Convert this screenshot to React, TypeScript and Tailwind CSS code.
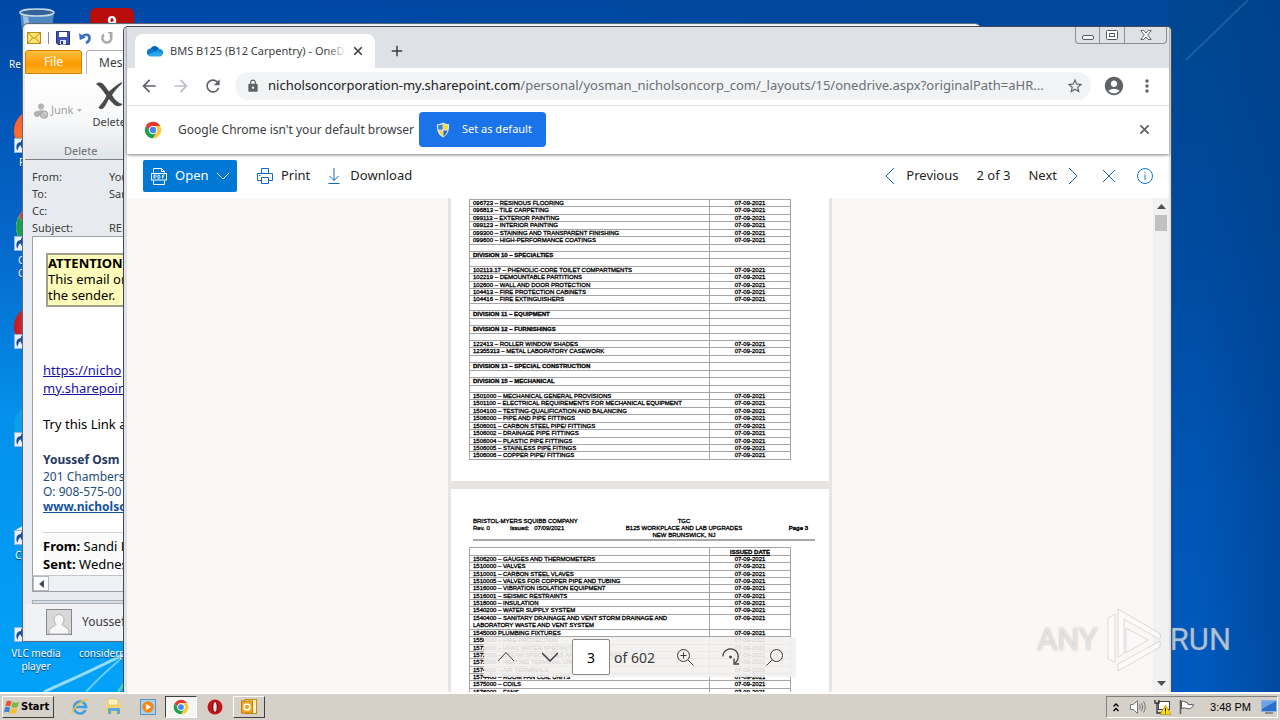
import React from "react";
import {
  MdArrowBack,
  MdArrowForward,
  MdRefresh,
  MdLock,
  MdStarBorder,
  MdAccountCircle,
  MdMoreVert,
  MdAdd,
} from "react-icons/md";

type Row = { text: string; date?: string; heading?: boolean; tall?: boolean };

const D = "07-09-2021";
const item = (text: string): Row => ({ text, date: D });
const division = (text: string): Row => ({ text, heading: true });
const blank: Row = { text: "" };

const pageTwoRows: Row[] = [
  item("096723 – RESINOUS FLOORING"),
  item("096813 – TILE CARPETING"),
  item("099113 – EXTERIOR PAINTING"),
  item("099123 – INTERIOR PAINTING"),
  item("099300 – STAINING AND TRANSPARENT FINISHING"),
  item("099600 – HIGH-PERFORMANCE COATINGS"),
  blank,
  division("DIVISION 10 – SPECIALTIES"),
  blank,
  item("102113.17 – PHENOLIC-CORE TOILET COMPARTMENTS"),
  item("102219 – DEMOUNTABLE PARTITIONS"),
  item("102600 – WALL AND DOOR PROTECTION"),
  item("104413 – FIRE PROTECTION CABINETS"),
  item("104416 – FIRE EXTINGUISHERS"),
  blank,
  division("DIVISION 11 – EQUIPMENT"),
  blank,
  division("DIVISION 12 – FURNISHINGS"),
  blank,
  item("122413 – ROLLER WINDOW SHADES"),
  item("12355313 – METAL LABORATORY CASEWORK"),
  blank,
  division("DIVISION 13 – SPECIAL CONSTRUCTION"),
  blank,
  division("DIVISION 15 – MECHANICAL"),
  blank,
  item("1501000 – MECHANICAL GENERAL PROVISIONS"),
  item("1501100 – ELECTRICAL REQUIREMENTS FOR MECHANICAL EQUIPMENT"),
  item("1504100 – TESTING-QUALIFICATION AND BALANCING"),
  item("1506000 – PIPE AND PIPE FITTINGS"),
  item("1506001 – CARBON STEEL PIPE/ FITTINGS"),
  item("1506002 – DRAINAGE PIPE FITTINGS"),
  item("1506004 – PLASTIC PIPE FITTINGS"),
  item("1506005 – STAINLESS PIPE FITINGS"),
  item("1506006 – COPPER PIPE/ FITTINGS"),
];

const pageThreeRows: Row[] = [
  item("1506200 – GAUGES AND THERMOMETERS"),
  item("1510000 – VALVES"),
  item("1510001 – CARBON STEEL VLAVES"),
  item("1510005 – VALVES FOR COPPER PIPE AND TUBING"),
  item("1516000 – VIBRATION ISOLATION EQUIPMENT"),
  item("1516001 – SEISMIC RESTRAINTS"),
  item("1518000 – INSULATION"),
  item("1540200 – WATER SUPPLY SYSTEM"),
  {
    text: "1540400 – SANITARY DRAINAGE AND VENT STORM DRAINAGE AND LABORATORY WASTE AND VENT SYSTEM",
    date: D,
    tall: true,
  },
  item("1545000 PLUMBING FIXTURES"),
  item("1550000 – FIRE PROTECTION"),
  item("1571000 – HVAC WATER SPECIALTIES"),
  item("1572000 – STEAM SPECIALTIES AND ACCESSORIES"),
  item("1573000 – HEATING TERMINAL UNITS"),
  item("1574000 – AIR TERMINALS"),
  item("1574400 – ROOM FAN COIL UNITS"),
  item("1575000 – COILS"),
  item("1576000 – FANS"),
];

function SpecTable({ rows, header, height }: { rows: Row[]; header?: boolean; height: string }) {
  return (
    <table
      className={`w-[322px] table-fixed border-collapse text-[6px] leading-[6px] text-black [-webkit-text-stroke:0.3px_#000] ${height}`}
    >
      <colgroup>
        <col />
        <col className="w-[81px]" />
      </colgroup>
      {header && (
        <thead>
          <tr className="h-2">
            <th className="border border-[#a5a5a5] p-0" />
            <th className="border border-[#a5a5a5] p-0 text-center font-bold underline">ISSUED DATE</th>
          </tr>
        </thead>
      )}
      <tbody>
        {rows.map((row, i) => (
          <tr key={i} className={row.tall ? "h-[15px]" : "h-[7px]"}>
            <td
              className={`border border-[#a5a5a5] p-0 pl-[3px] align-top ${
                row.tall ? "pr-8 leading-[7px]" : "whitespace-nowrap"
              } ${row.heading ? "font-bold" : ""}`}
            >
              {row.text}
            </td>
            <td className="border border-[#a5a5a5] p-0 text-center align-top">{row.date}</td>
          </tr>
        ))}
      </tbody>
    </table>
  );
}

function ChromeLogo({ className }: { className?: string }) {
  return (
    <svg viewBox="0 0 48 48" className={className} aria-hidden="true">
      <circle cx="24" cy="24" r="22" fill="#fff" />
      <path d="M24 13h19.1A22 22 0 0 0 5 13l9.5 16.5A11 11 0 0 1 24 13z" fill="#e33b2e" />
      <path d="M33.5 29.5L24 46A22 22 0 0 0 43.1 13H24a11 11 0 0 1 9.5 16.5z" fill="#fcc934" />
      <path d="M14.5 29.5L5 13a22 22 0 0 0 19 33l9.5-16.5a11 11 0 0 1-19 0z" fill="#1e9e4f" />
      <circle cx="24" cy="24" r="11" fill="#fff" />
      <circle cx="24" cy="24" r="8.6" fill="#4285f4" />
    </svg>
  );
}

function OneDriveLogo() {
  return (
    <svg viewBox="0 2 16 12" className="h-3 w-4 shrink-0" aria-hidden="true">
      <path d="M3.500 6A4.600 4.600 0 0 1 12 5.800L10 10 4 9z" fill="#0364b8" />
      <path d="M3.600 5.500a3.900 3.900 0 0 0-3 6.300L9.500 9.500 6 6.200A4 4 0 0 0 3.600 5.500z" fill="#0f78d4" />
      <path d="M12 5.800a3.800 3.800 0 0 1 3.600 5.600L8.500 8.500A4 4 0 0 1 12 5.800z" fill="#1490df" />
      <path d="M.6 11.800A3.600 3.600 0 0 0 3.600 13.500h9.200a3 3 0 0 0 2.800-2.100L9 8.300z" fill="#28a8ea" />
    </svg>
  );
}

function Shield() {
  return (
    <svg viewBox="0 0 16 18" className="h-4 w-[14px] shrink-0" aria-hidden="true">
      <path d="M8 .5C6 2 3.500 2.500 1 2.500 1 9 2 14.500 8 17.500 14 14.500 15 9 15 2.500 12.500 2.500 10 2 8 .5z" fill="#e8eef5" />
      <path d="M7.600 2.200C6 3.200 4.200 3.700 2.200 3.700c0 1.800.1 3.600.5 5.100h4.900z" fill="#3d86d6" />
      <path d="M8.400 2.200c1.600 1 3.400 1.500 5.400 1.500 0 1.800-.1 3.600-.5 5.100H8.400z" fill="#f9d835" />
      <path d="M2.900 9.600C3.600 12.500 5 14.700 7.600 16.200V9.600z" fill="#f9d835" />
      <path d="M13.100 9.600c-.7 2.900-2.100 5.100-4.700 6.600V9.600z" fill="#2e6cc0" />
    </svg>
  );
}

function PdfIcon() {
  return (
    <svg viewBox="0 0 16 17" className="h-[17px] w-4" fill="none" stroke="#fff" strokeWidth="1" aria-hidden="true">
      <path d="M2.500 4.500v-4h8l3 3v1M2.500 12.500v4h11v-4M10.500.5v3h3" />
      <rect x=".5" y="5.500" width="15" height="6.500" />
      <path d="M3 10.500V7h1.200a1 1 0 0 1 0 2.200H3M7 7v3.500h.7c1.800 0 1.800-3.500 0-3.500zM11.500 10.500V7h2M11.500 8.800h1.600" strokeWidth=".9" />
    </svg>
  );
}

function PrinterIcon() {
  return (
    <svg viewBox="0 0 16 16" className="size-4" fill="none" stroke="#0f6cbd" aria-hidden="true">
      <path d="M4.500 5.500v-5h7v5M4.500 12.500h-4v-7h15v7h-4M4.500 9.500h7v6h-7zM2 7.500h1.500" />
    </svg>
  );
}

function DownloadIcon() {
  return (
    <svg viewBox="0 0 12 16" className="h-4 w-3" fill="none" stroke="#0f6cbd" aria-hidden="true">
      <path d="M6 0v12.500M1.500 8L6 12.500 10.500 8M.5 15.500h11" />
    </svg>
  );
}

function Chevron({ d, className }: { d: string; className: string }) {
  return (
    <svg viewBox="0 0 16 16" className={className} fill="none" stroke="currentColor" strokeWidth="1" aria-hidden="true">
      <path d={d} />
    </svg>
  );
}

function CrossIcon({ className }: { className: string }) {
  return (
    <svg viewBox="0 0 12 12" className={className} fill="none" stroke="currentColor" strokeWidth="2" aria-hidden="true">
      <path d="M1.500 1.500l9 9M10.500 1.500l-9 9" />
    </svg>
  );
}

function InfoIcon() {
  return (
    <svg viewBox="0 0 16 16" className="size-4" fill="none" stroke="#0f78d4" aria-hidden="true">
      <circle cx="8" cy="8" r="7.500" />
      <path d="M8 6.500V12M8 4v1.200" />
    </svg>
  );
}

function Shortcut({ className, children }: { className: string; children?: React.ReactNode }) {
  return (
    <div className={`absolute ${className}`}>
      {children}
      <svg viewBox="0 0 15 15" className="absolute bottom-0 left-0 size-[15px]" aria-hidden="true">
        <rect x=".5" y=".5" width="14" height="14" fill="#e9f1f8" stroke="#8fb4d8" />
        <path d="M3.500 13C1 8 3 4 7 4V1.500L11 6l-4 4V7.500C5 7.500 4 9.500 3.500 13z" fill="#1b4f9c" />
      </svg>
    </div>
  );
}

function DesktopLabel({ className, children }: { className: string; children: React.ReactNode }) {
  return (
    <span className={`absolute text-[10px] leading-[13px] text-white [text-shadow:0_1px_1px_#003a70] ${className}`}>
      {children}
    </span>
  );
}

function Wallpaper() {
  return (
    <div className="absolute inset-0 bg-[linear-gradient(to_bottom,#0047a5_0%,#0565c8_33%,#0490ec_60%,#03a2f8_100%)]">
      <div className="absolute inset-0 bg-[linear-gradient(to_right,transparent_0%,transparent_15%,#00489c_70%)]" />
      <div className="absolute inset-y-0 right-0 w-28 bg-[linear-gradient(to_bottom,#00468f_0%,#004a9e_35%,#0055b4_70%,#005abf_100%)]" />
      <div className="absolute inset-y-0 right-0 w-28 bg-[linear-gradient(to_right,transparent_30%,#003f8a_100%)] opacity-60" />
      <svg viewBox="0 0 110 64" className="absolute top-0 right-0 h-16 w-[110px]" fill="none" aria-hidden="true">
        <path d="M16 60L78 0" stroke="#4b8cc4" strokeWidth="2" opacity=".35" />
      </svg>
      <svg viewBox="0 0 124 52" className="absolute bottom-0 left-0 h-[52px] w-[124px]" fill="none" aria-hidden="true">
        <path d="M44 52C70 40 98 28 124 14" stroke="#b9ecff" strokeWidth="3" opacity=".8" />
        <path d="M86 52C98 38 110 28 124 16" stroke="#8fe0ff" strokeWidth="2" opacity=".7" />
        <path d="M118 52L124 44" stroke="#6fdc9a" strokeWidth="3" opacity=".7" />
      </svg>
    </div>
  );
}

function DesktopIcons() {
  return (
    <>
      <svg viewBox="0 0 36 40" className="absolute top-2 left-[19px] h-10 w-9" aria-hidden="true">
        <path d="M1 4l4 36h26l4-36z" fill="#5f92c6" opacity=".85" />
        <path d="M4 8l3 30h8L9 9z" fill="#c4dcf0" opacity=".7" />
        <ellipse cx="18" cy="4.500" rx="17" ry="3.500" fill="#34629b" stroke="#c9dcec" strokeWidth="1.500" />
      </svg>
      <div className="absolute top-2 left-[90px] h-10 w-11 rounded-md bg-[#b80d0a] pt-1 text-center text-[16px] leading-5 font-bold text-white">
        9
      </div>
      <DesktopLabel className="top-[58px] left-[9px]">Re</DesktopLabel>
      <Shortcut className="top-[105px] left-[14px] size-12">
        <div className="mt-1 size-11 rounded-full bg-[linear-gradient(#ff5a3c,#ff7a18)]" />
      </Shortcut>
      <DesktopLabel className="top-[156px] left-[19px]">F</DesktopLabel>
      <Shortcut className="top-[203px] left-[14px] size-12">
        <ChromeLogo className="size-12" />
      </Shortcut>
      <DesktopLabel className="top-[254px] left-[18px]">
        G
        <br />
        C
      </DesktopLabel>
      <Shortcut className="top-[301px] left-[14px] size-12">
        <div className="mt-1 size-11 rounded-full bg-[linear-gradient(to_right,#c4161c,#ff6f6f)]" />
      </Shortcut>
      <Shortcut className="top-[399px] left-[14px] size-12">
        <div className="mt-1 size-11 rounded-full bg-[#12a9e8] opacity-60" />
      </Shortcut>
      <Shortcut className="top-[497px] left-[14px] size-12">
        <svg viewBox="0 0 48 48" className="size-12" aria-hidden="true">
          <path d="M0 34l20-12 20 12z" fill="#e8edf2" />
        </svg>
      </Shortcut>
      <DesktopLabel className="top-[549px] left-[15px]">C</DesktopLabel>
      <Shortcut className="top-[594px] left-[14px] size-12" />
      <DesktopLabel className="top-[647px] left-0 w-[72px] text-center">VLC media player</DesktopLabel>
      <DesktopLabel className="top-[647px] left-[79px]">considerpe</DesktopLabel>
    </>
  );
}

function MailWindow() {
  const fields: [string, string][] = [
    ["From:", "Youss"],
    ["To:", "Sandi"],
    ["Cc:", ""],
    ["Subject:", "RE: B"],
  ];
  return (
    <section
      aria-label="Message"
      className="absolute top-[23px] right-[299px] bottom-[50px] left-[22px] flex flex-col overflow-hidden rounded-t-md border border-[#5c6a78] bg-[#e7ebf0] p-px pl-[2px] text-[#3b3b3b]"
    >
      <div className="flex h-[25px] shrink-0 items-center gap-2 bg-white pl-[2px]">
        <svg viewBox="0 0 14 12" className="h-3 w-[14px]" aria-hidden="true">
          <rect x=".5" y=".5" width="13" height="11" fill="#ffe571" stroke="#b48a1c" />
          <path d="M1 1l6 5.500L13 1M1 11l4.500-5M13 11L8.500 6" fill="none" stroke="#b48a1c" />
        </svg>
        <span className="-mx-px h-3 w-px bg-[#8a8f96]" />
        <svg viewBox="0 0 14 14" className="size-[14px]" aria-hidden="true">
          <path d="M.5.5h13v13H2L.5 12z" fill="#3d50b4" stroke="#26357f" />
          <rect x="3" y="1" width="8" height="5" fill="#fff" />
          <rect x="4" y="9" width="6" height="4.500" fill="#dfe4f4" />
          <rect x="5" y="10" width="2" height="3" fill="#26357f" />
        </svg>
        <svg viewBox="0 0 14 14" className="size-[14px]" fill="none" aria-hidden="true">
          <path d="M3.500 6.500C7 2 12 3.500 11.500 7.500c-.2 2-1.500 3.500-3.500 4.500" stroke="#3f6fc4" strokeWidth="2.600" />
          <path d="M1 2l.8 7 6-2.200z" fill="#3f6fc4" />
        </svg>
        <svg viewBox="0 0 14 14" className="size-[14px]" fill="none" aria-hidden="true">
          <path d="M4 3.500a4.500 4.500 0 1 0 6 .3" stroke="#a9a9a9" strokeWidth="2.400" />
          <path d="M7.500 1h5v5z" fill="#a9a9a9" />
        </svg>
      </div>
      <div className="flex h-6 shrink-0 items-end gap-1 bg-white text-[12px]">
        <button type="button" className="h-6 w-[57px] rounded-t-[3px] border border-[#d07a00] bg-[linear-gradient(#ffc03c,#fb9a02_60%,#ffb52a)] text-center text-white">
          File
        </button>
        <button type="button" className="h-6 w-20 rounded-t-[3px] border border-b-0 border-[#b0b4ba] bg-white pl-3 text-left">
          Messa
        </button>
      </div>
      <div className="flex h-[86px] shrink-0 flex-col border-b border-[#7b828b] bg-[linear-gradient(#ffffff_0%,#f7f8f9_55%,#e1e4e8_100%)] text-[11px]">
        <div className="flex flex-1 gap-[10px] pl-2">
          <span className="flex items-center gap-[2px] pt-1 text-[#a0a0a0]">
            <svg viewBox="0 0 16 16" className="size-4" aria-hidden="true">
              <circle cx="8" cy="3.500" r="3" fill="#b5b5b5" />
              <path d="M3 13V9l5-3 3 2.500V13z" fill="#c3c3c3" />
              <circle cx="4" cy="11" r="3" fill="#b0b0b0" />
              <circle cx="11" cy="11.500" r="3.700" fill="#d0d0d0" stroke="#999" />
              <path d="M8.500 9l5 5" stroke="#999" />
            </svg>
            Junk
            <svg viewBox="0 0 5 3" className="ml-[2px] h-[3px] w-[5px]" aria-hidden="true">
              <path d="M0 0h5L2.500 3z" fill="#b5b5b5" />
            </svg>
          </span>
          <span className="flex flex-col items-center gap-1 pt-[8px] leading-4">
            <svg viewBox="0 0 28 28" className="size-7" aria-hidden="true">
              <path d="M1 2c4-3 7-1 10 3.500l3 4C18 6 21 3 26 .5c1.500-.5 1.500.5.500 1.500-4 4-6.500 6.500-9.500 11 3 5 6 8 10.500 9-2 3-6 2.500-8.500.5-2-2-3.500-3.500-5-5.500-2.500 4-4 8-6 9.500-1.500 1-4 .5-4.500-1 3-3.500 5.500-7 8-11.500C8 9 5 4.500 1 2z" fill="#4a4a4a" />
            </svg>
            Delete
          </span>
        </div>
        <span className="pl-[39px] leading-4 text-[#6a6f76]">Delete</span>
      </div>
      <dl className="grid shrink-0 grid-cols-[77px_1fr] pt-2 pl-[7px] text-[11px] leading-[17px]">
        {fields.map(([k, v]) => (
          <React.Fragment key={k}>
            <dt>{k}</dt>
            <dd>{v}</dd>
          </React.Fragment>
        ))}
      </dl>
      <div className="ml-[7px] flex min-h-0 flex-1 flex-col border border-[#9aa1aa] bg-white text-black">
        <div className="min-h-0 flex-1 overflow-hidden pl-[10px] text-[13px] leading-[18px]">
          <div className="mt-[16px] ml-[3px] h-[54px] border-2 border-[#a3a08a] bg-[#fffbb8] leading-4">
            <b>ATTENTION</b>
            <br />
            This email or
            <br />
            the sender.
          </div>
          <p className="mt-[54px]">
            <a href="#link" className="text-[#1712a8] underline">
              https://nicho
              <br />
              my.sharepoint
            </a>
          </p>
          <p className="mt-[18px]">Try this Link an</p>
          <address className="mt-[18px] text-[12px] leading-[15px] text-[#1f4e79] not-italic">
            <b className="block text-[12px] leading-[18px] text-[#1f3864]">Youssef Osm</b>
            201 Chambers
            <br />
            O: 908-575-00
            <br />
            <a href="#site" className="font-bold text-[#1552a0] underline">
              www.nicholson
            </a>
          </address>
          <p className="mt-[18px] border-t border-[#d4d4d4] bg-[#fafafa] pt-1">
            <b>From:</b> Sandi K
            <br />
            <b>Sent:</b> Wednes
          </p>
        </div>
        <div className="flex h-4 shrink-0 border-t border-[#c2c6cc] bg-[#eef0f3]">
          <div className="flex w-4 items-center justify-center border border-[#b4b9c0] bg-white">
            <svg viewBox="0 0 5 8" className="h-2 w-[5px]" aria-hidden="true">
              <path d="M5 0v8L0 4z" fill="#444b57" />
            </svg>
          </div>
        </div>
      </div>
      <div className="mt-2 ml-[7px] h-1 shrink-0 border border-[#aab0b8] bg-[#d8dce2]" />
      <div className="flex h-9 shrink-0 items-center gap-[10px] bg-[#f0f2f5] pl-[21px] text-[12px]">
        <svg viewBox="0 0 26 26" className="size-[26px]" aria-hidden="true">
          <rect x=".5" y=".5" width="25" height="25" fill="#d8d8d8" stroke="#868686" />
          <path d="M13 5.500c3 0 5 2 5 5 0 2-1 3.500-2 5 1 2 7 2.500 7 7.500v2H3v-2c0-5 6-5.500 7-7.500-1-1.500-2-3-2-5 0-3 2-5 5-5z" fill="#f7f7f7" stroke="#b0b0b0" />
        </svg>
        Youssef
      </div>
    </section>
  );
}

function WindowButtons() {
  return (
    <div className="mr-[2px] flex h-[17px] rounded-b-[4px] border border-t-0 border-[#8b8f95]">
      <button type="button" aria-label="Minimize" className="flex w-6 items-center justify-center border-r border-[#8b8f95]">
        <svg viewBox="0 0 12 5" className="mt-1 h-[5px] w-3" fill="#fff" stroke="#55595f" aria-hidden="true">
          <rect x=".5" y=".5" width="11" height="4" rx="1.500" />
        </svg>
      </button>
      <button type="button" aria-label="Maximize" className="flex w-[25px] items-center justify-center border-r border-[#8b8f95]">
        <svg viewBox="0 0 12 10" className="h-[10px] w-3" fill="#fff" stroke="#55595f" aria-hidden="true">
          <rect x=".5" y=".5" width="11" height="9" rx="1" />
          <rect x="3.500" y="3.500" width="5" height="3" />
        </svg>
      </button>
      <button type="button" aria-label="Close" className="flex w-[41px] items-center justify-center">
        <svg viewBox="0 0 12 10" className="h-[10px] w-3" fill="#fff" stroke="#55595f" strokeWidth=".9" aria-hidden="true">
          <path d="M.8.5h2.900L6 3 8.300.5h2.900L7.700 5l3.500 4.500H8.300L6 7 3.700 9.500H.8L4.300 5z" />
        </svg>
      </button>
    </div>
  );
}

function BrowserChrome() {
  return (
    <header className="relative z-10 shrink-0 bg-[#dee1e6] shadow-[0_1px_3px_rgba(0,0,0,0.5)]">
      <div className="flex h-[41px] items-start">
        <div className="mt-[7px] ml-2 flex h-[34px] w-60 items-center gap-[7px] rounded-t-lg bg-white px-3">
          <OneDriveLogo />
          <span className="relative flex-1 overflow-hidden text-[11px] leading-4 whitespace-nowrap text-[#3c4043]">
            BMS B125 (B12 Carpentry) - OneDri
            <span className="absolute inset-y-0 right-0 w-5 bg-[linear-gradient(to_right,transparent,#fff)]" />
          </span>
          <button type="button" aria-label="Close tab" className="text-[#3c4043]">
            <CrossIcon className="size-[10px]" />
          </button>
        </div>
        <button type="button" aria-label="New tab" className="mt-[15px] ml-[13px] text-[#3c4043]">
          <MdAdd className="size-[18px]" />
        </button>
        <div className="flex-1" />
        <WindowButtons />
      </div>
      <div className="flex h-[38px] items-center border-b border-[#dcdee1] bg-white pb-px text-[#5f6368]">
        <button type="button" aria-label="Back" className="ml-3">
          <MdArrowBack className="size-5" />
        </button>
        <button type="button" aria-label="Forward" className="ml-3 text-[#bdc1c6]">
          <MdArrowForward className="size-5" />
        </button>
        <button type="button" aria-label="Reload" className="ml-3">
          <MdRefresh className="size-5" />
        </button>
        <div className="ml-3 flex h-7 min-w-0 flex-1 items-center rounded-full bg-[#f1f3f4] pr-[7px] pl-[11px]">
          <MdLock className="size-[14px] shrink-0" />
          <span className="ml-2 flex-1 overflow-hidden text-[13px] whitespace-nowrap text-[#6b6f74]">
            <span className="text-[#202124]">nicholsoncorporation-my.sharepoint.com</span>
            /personal/yosman_nicholsoncorp_com/_layouts/15/onedrive.aspx?originalPath=aHR...
          </span>
          <button type="button" aria-label="Bookmark" className="ml-2">
            <MdStarBorder className="size-[18px]" />
          </button>
        </div>
        <button type="button" aria-label="Profile" className="ml-3">
          <MdAccountCircle className="size-[22px]" />
        </button>
        <button type="button" aria-label="Menu" className="mr-3 ml-3">
          <MdMoreVert className="size-5" />
        </button>
      </div>
      <div className="flex h-12 items-center bg-white pb-px">
        <ChromeLogo className="ml-[17px] size-[18px]" />
        <span className="ml-4 w-[229px] text-[12px] whitespace-nowrap text-[#3c4043]">Google Chrome isn't your default browser</span>
        <button type="button" className="ml-3 flex h-[35px] w-[127px] items-center gap-3 rounded-[4px] bg-[#1a73e8] pl-[17px] text-[11px] text-white">
          <Shield />
          Set as default
        </button>
        <div className="flex-1" />
        <button type="button" aria-label="Dismiss" className="mr-[19px] text-[#5f6368]">
          <CrossIcon className="size-[11px]" />
        </button>
      </div>
    </header>
  );
}

function CommandBar() {
  return (
    <nav className="flex h-11 shrink-0 items-center bg-white pl-4 text-[13px] text-[#242424]">
      <button type="button" className="flex h-8 w-[94px] items-center rounded-[2px] bg-[#0078d4] pl-2 text-white">
        <PdfIcon />
        <span className="ml-2">Open</span>
        <Chevron d="M2 5l6 6 6-6" className="ml-[6px] size-4" />
      </button>
      <button type="button" className="ml-5 flex items-center gap-2">
        <PrinterIcon />
        Print
      </button>
      <button type="button" className="ml-[18px] flex items-center gap-[10px]">
        <DownloadIcon />
        Download
      </button>
      <div className="flex-1" />
      <button type="button" className="flex items-center gap-2">
        <Chevron d="M12 0L4 8l8 8" className="size-4 text-[#0f6cbd]" />
        Previous
      </button>
      <span className="ml-[18px]">2 of 3</span>
      <button type="button" className="ml-[18px] flex items-center gap-2">
        Next
        <Chevron d="M4 0l8 8-8 8" className="size-4 text-[#0f6cbd]" />
      </button>
      <button type="button" aria-label="Close" className="ml-5">
        <Chevron d="M2 2l12 12M14 2L2 14" className="size-4 text-[#0f6cbd]" />
      </button>
      <button type="button" aria-label="Information" className="mr-4 ml-5">
        <InfoIcon />
      </button>
    </nav>
  );
}

function PdfToolbar() {
  return (
    <div className="absolute bottom-[15px] left-[357px] flex h-10 w-[312px] items-center bg-[#f3f1f0]/90 text-[#3b3a39]">
      <button type="button" aria-label="Previous page" className="ml-[14px]">
        <Chevron d="M0 12l8-8.500 8 8.500" className="size-4" />
      </button>
      <button type="button" aria-label="Next page" className="ml-7">
        <Chevron d="M0 4l8 8 8-8" className="size-4 stroke-[1.500]" />
      </button>
      <input
        aria-label="Page number"
        defaultValue="3"
        className="ml-[14px] h-9 w-[38px] rounded-[2px] border border-[#8a8886] bg-white text-center text-[14px] text-black"
      />
      <span className="ml-1 text-[14px]">of 602</span>
      <button type="button" aria-label="Zoom in" className="ml-[22px]">
        <svg viewBox="0 0 17 17" className="size-[17px]" fill="none" stroke="currentColor" aria-hidden="true">
          <circle cx="6.500" cy="6.500" r="6" />
          <path d="M10.800 10.800l5.700 5.700M3.500 6.500h6M6.500 3.500v6" />
        </svg>
      </button>
      <button type="button" aria-label="Rotate" className="ml-7">
        <svg viewBox="0 0 18 18" className="size-[18px]" fill="none" stroke="currentColor" aria-hidden="true">
          <path d="M.8 8.500A7.700 7.700 0 1 1 12.800 15" strokeWidth="1.200" />
          <path d="M12 10.500v5.500h5" strokeWidth="1.300" />
          <circle cx="8.500" cy="9" r="1" fill="currentColor" />
        </svg>
      </button>
      <button type="button" aria-label="Search" className="ml-[26px]">
        <svg viewBox="0 0 17 17" className="size-[17px]" fill="none" stroke="currentColor" aria-hidden="true">
          <circle cx="10.500" cy="6.500" r="6" />
          <path d="M6.200 10.800L.5 16.500" />
        </svg>
      </button>
    </div>
  );
}

function Viewer() {
  return (
    <main className="relative flex min-h-0 flex-1 overflow-hidden bg-[#faf7f5]">
      <div className="flex min-w-0 flex-1 flex-col items-center overflow-hidden font-['Liberation_Sans',sans-serif]">
        <div className="flex w-[384px] flex-col gap-2 bg-[#e6e5e4] px-[3px]">
          <article className="h-[283px] shrink-0 bg-white pt-px pl-[18px]">
            <SpecTable rows={pageTwoRows} height="h-[261px]" />
          </article>
          <article className="h-[300px] shrink-0 bg-white pt-7 pl-[18px]">
            <div className="ml-1 grid w-[342px] grid-cols-[110px_1fr_70px] border-b-2 border-[#a8a8a8] pt-px text-[6px] leading-[7px] font-normal text-black [-webkit-text-stroke:0.3px_#000]">
              <div className="whitespace-nowrap">
                BRISTOL-MYERS SQUIBB COMPANY
                <div className="flex gap-5">
                  <span>Rev. 0</span>
                  <span>Issued: &nbsp; 07/09/2021</span>
                </div>
              </div>
              <div className="ml-10 text-center whitespace-nowrap">
                TGC
                <br />
                B125 WORKPLACE AND LAB UPGRADES
                <br />
                NEW BRUNSWICK, NJ
              </div>
              <div className="self-center pr-[7px] text-right font-bold">Page 3</div>
            </div>
            <div className="pt-[6px]">
              <SpecTable rows={pageThreeRows} header height="h-[149px]" />
            </div>
          </article>
        </div>
      </div>
      <div className="flex w-4 shrink-0 flex-col items-center bg-[#f1f1f1]">
        <svg viewBox="0 0 16 17" className="h-[17px] w-4" aria-hidden="true">
          <path d="M4 11h9L8.500 6z" fill="#505050" />
        </svg>
        <div className="h-4 w-3 bg-[#c1c1c1]" />
        <div className="flex-1" />
        <svg viewBox="0 0 16 17" className="h-[17px] w-4" aria-hidden="true">
          <path d="M4 6h9l-4.500 5z" fill="#505050" />
        </svg>
      </div>
      <PdfToolbar />
    </main>
  );
}

function BrowserWindow() {
  return (
    <section
      aria-label="Browser"
      className="absolute top-[26px] right-[108px] bottom-0 left-[123px] flex flex-col overflow-hidden rounded-t-[5px] border border-b-0 border-[#3f4a57] bg-[#dee1e6] pr-[2px] pl-[3px]"
    >
      <BrowserChrome />
      <CommandBar />
      <Viewer />
    </section>
  );
}

function Watermark() {
  return (
    <div className="absolute right-[49px] bottom-5 z-20 flex items-center gap-2 font-['Roboto',sans-serif] text-[31px] leading-[60px] text-white/60 [text-shadow:0_0_2px_rgba(120,120,120,0.6)]">
      <span>ANY</span>
      <svg viewBox="0 0 56 64" className="h-16 w-14" fill="#fff" fillOpacity=".6" stroke="#8a9098" strokeOpacity=".3" aria-hidden="true">
        <path d="M2 10l7-4v48l-7-3zM12 1l41 24c2 2 2 5 0 6L18 11v34l-6 4zM12 63l42-24v-6L12 56z" />
        <path d="M20 20v25l22-13z" fillOpacity=".25" />
      </svg>
      <span>RUN</span>
    </div>
  );
}

function Taskbar() {
  return (
    <footer className="z-30 flex h-7 shrink-0 items-center border-t-2 border-white bg-[#d5d0c8] pl-[2px]">
      <button type="button" className="flex h-[22px] w-[52px] items-center gap-px border border-t-white border-r-[#404040] border-b-[#404040] border-l-white pl-px font-['DejaVu_Sans_Condensed','DejaVu_Sans',sans-serif] text-[11px] font-bold text-black">
        <svg viewBox="0 0 16 14" className="h-[14px] w-4 shrink-0" aria-hidden="true">
          <path d="M2.500 1.500C4 .5 6 .5 7.500 1.500L6.300 6.500C5 5.500 3 5.500 1.300 6.500z" fill="#e8532b" />
          <path d="M8.500 2c1.500 1 4 1 6.500 0L13.500 7c-2 1-4.500 1-6 0z" fill="#7fb83e" />
          <path d="M1 7.500c1.500-1 3.500-1 5 0L5 12.500c-1.500-1-3.500-1-5 0z" fill="#3f7fd6" />
          <path d="M7 8c1.500 1 4 1 6.300 0L12 13c-2 1-4.500 1-6.200 0z" fill="#f5c12e" />
        </svg>
        Start
      </button>
      <div className="ml-[9px] flex items-center">
        <button type="button" aria-label="Internet Explorer" className="flex w-[34px] justify-center">
          <svg viewBox="0 0 18 18" className="size-[18px]" fill="none" aria-hidden="true">
            <path d="M14.500 12A6 6 0 1 1 15 9H5" stroke="#3d9fe0" strokeWidth="2.600" />
            <path d="M1 16c-1-4 9-14 15.500-14" stroke="#f3c43c" strokeWidth="1.500" />
          </svg>
        </button>
        <button type="button" aria-label="Explorer" className="flex w-[34px] justify-center">
          <svg viewBox="0 0 18 18" className="size-[18px]" aria-hidden="true">
            <path d="M1 3h6l1 2h8v10H1z" fill="#f2d675" />
            <path d="M3 1h10v6H3z" fill="#fbf1c0" stroke="#d9b64c" strokeWidth=".6" />
            <path d="M3 16V10h12v6h-3v-3H6v3z" fill="#58a9e0" />
          </svg>
        </button>
        <button type="button" aria-label="Media Player" className="flex w-[34px] justify-center">
          <svg viewBox="0 0 16 16" className="size-4" aria-hidden="true">
            <rect x=".5" y=".5" width="15" height="15" fill="#a7d2ef" stroke="#5b93c2" />
            <circle cx="8" cy="8" r="5.800" fill="#f28a1a" />
            <path d="M6.200 5v6l5-3z" fill="#fff" />
          </svg>
        </button>
        <button type="button" aria-label="Google Chrome" className="flex h-[22px] w-8 items-center justify-center border border-t-[#404040] border-r-white border-b-white border-l-[#404040] bg-[#f6f5f3]">
          <ChromeLogo className="size-4" />
        </button>
        <button type="button" aria-label="Opera" className="flex w-9 justify-center">
          <svg viewBox="0 0 16 16" className="size-4" aria-hidden="true">
            <circle cx="8" cy="8" r="7.500" fill="#c0161c" />
            <ellipse cx="8" cy="8" rx="3" ry="5.500" fill="#7e0a10" />
            <ellipse cx="8" cy="8" rx="1.700" ry="4.800" fill="#f0e4e4" />
          </svg>
        </button>
        <button type="button" aria-label="Outlook" className="flex h-[22px] w-8 items-center justify-center border border-t-white border-r-[#404040] border-b-[#404040] border-l-white">
          <svg viewBox="0 0 16 16" className="size-4" aria-hidden="true">
            <rect x="4" y=".5" width="11.500" height="14" fill="#fff3c0" stroke="#c98a12" />
            <rect x=".5" y="2" width="11" height="12" fill="#f5a81c" stroke="#c27c08" />
            <circle cx="6" cy="8" r="3" fill="none" stroke="#fff" strokeWidth="1.600" />
          </svg>
        </button>
      </div>
      <div className="flex-1" />
      <div className="mr-[2px] flex h-[22px] items-center border border-t-[#808080] border-r-white border-b-white border-l-[#808080] pl-[6px]">
        <svg viewBox="0 0 6 9" className="h-[9px] w-[6px]" fill="none" stroke="#000" strokeWidth="1.300" aria-hidden="true">
          <path d="M.5 3.500L3 1l2.500 2.500M.5 8L3 5.500 5.500 8" />
        </svg>
        <svg viewBox="0 0 16 14" className="ml-[11px] h-[14px] w-4" fill="none" stroke="#777" aria-hidden="true">
          <path d="M.5 4.500h3l4-4v13l-4-4h-3z" fill="#fff" />
          <path d="M9.500 4.500q1.500 2.500 0 5M11.500 3q2.500 4 0 8M13.500 1.500q3.500 5.500 0 11" />
        </svg>
        <svg viewBox="0 0 17 16" className="ml-2 h-4 w-[17px]" aria-hidden="true">
          <rect x="4.500" y="2.500" width="11" height="8" fill="#fff" stroke="#444" />
          <path d="M1 1v3h4V1M3 4v10h6" fill="none" stroke="#333" strokeWidth="1.300" />
          <path d="M11.500 6L17 15.500H6z" fill="#ffd91a" stroke="#a88400" strokeWidth=".6" />
          <path d="M11.500 9v3.500M11.500 13.500v1" stroke="#000" />
        </svg>
        <svg viewBox="0 0 15 14" className="ml-2 h-[14px] w-[15px]" fill="#fff" stroke="#555" aria-hidden="true">
          <path d="M2.500 1.500c3-1 4 1.500 6 1l.5 2c2 .5 4-.5 5.500 0-1.500 4-4 4.500-6.500 4-2-1-3.500-.5-5.500 0z" />
          <path d="M1.500 0v14" strokeWidth="1.500" />
        </svg>
        <time className="ml-4 font-['Liberation_Sans',sans-serif] text-[11px] text-black">3:48 PM</time>
        <svg viewBox="0 0 16 14" className="ml-[10px] h-[14px] w-4" aria-hidden="true">
          <rect x=".5" y=".5" width="15" height="11" fill="#2a6fc9" stroke="#8fb0d8" />
          <path d="M1 1h14L1 9z" fill="#6aa5e6" />
          <path d="M4 13h8" stroke="#777" strokeWidth="1.500" />
        </svg>
      </div>
    </footer>
  );
}

export default function App() {
  return (
    <div className="flex h-screen w-full flex-col overflow-hidden font-['Noto_Sans',sans-serif]">
      <div className="relative min-h-0 flex-1 overflow-hidden">
        <Wallpaper />
        <DesktopIcons />
        <MailWindow />
        <BrowserWindow />
        <Watermark />
      </div>
      <Taskbar />
    </div>
  );
}
